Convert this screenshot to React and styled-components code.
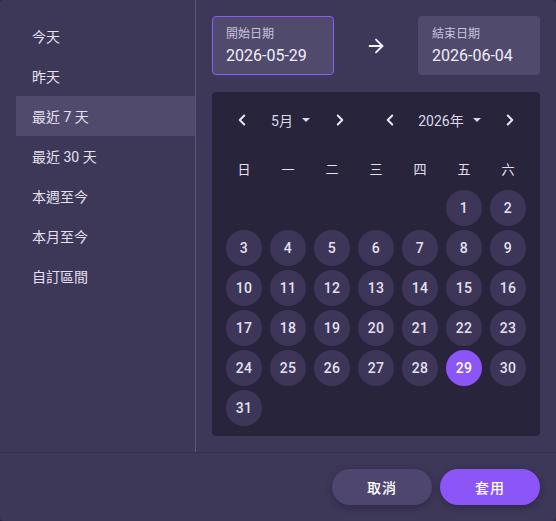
import React from "react";
import styled, { createGlobalStyle } from "styled-components";
import { ChevronLeft, ChevronRight, ArrowRight } from "lucide-react";

const GlobalStyle = createGlobalStyle`
  html, body {
    margin: 0;
    padding: 0;
    background: #2c2840;
  }
  body {
    font-family: Roboto, "Noto Sans CJK TC", sans-serif;
    color: #ebe7f7;
  }
`;

const presets = ["今天", "昨天", "最近 7 天", "最近 30 天", "本週至今", "本月至今", "自訂區間"];
const weekdays = ["日", "一", "二", "三", "四", "五", "六"];

// May 2026 starts on a Friday
const leadingBlanks = 5;
const daysInMonth = 31;
const selectedDay = 29;

const Picker = () => {
  const cells = [];
  for (let i = 0; i < leadingBlanks; i++) cells.push(null);
  for (let d = 1; d <= daysInMonth; d++) cells.push(d);

  return (
    <Dialog>
      <Body>
        <Sidebar>
          {presets.map((p) => (
            <Preset key={p} active={p === "最近 7 天"}>
              {p}
            </Preset>
          ))}
        </Sidebar>
        <Panel>
          <Inputs>
            <DateField focused>
              <FieldLabel>開始日期</FieldLabel>
              <FieldValue>2026-05-29</FieldValue>
            </DateField>
            <ArrowCell>
              <ArrowRight size={22} strokeWidth={2} />
            </ArrowCell>
            <DateField>
              <FieldLabel>結束日期</FieldLabel>
              <FieldValue>2026-06-04</FieldValue>
            </DateField>
          </Inputs>
          <Calendar>
            <Header>
              <NavGroup>
                <NavButton>
                  <ChevronLeft size={18} strokeWidth={2.6} />
                </NavButton>
                <Select>
                  5月
                  <Caret />
                </Select>
                <NavButton>
                  <ChevronRight size={18} strokeWidth={2.6} />
                </NavButton>
              </NavGroup>
              <NavGroup>
                <NavButton>
                  <ChevronLeft size={18} strokeWidth={2.6} />
                </NavButton>
                <Select>
                  2026年
                  <Caret />
                </Select>
                <NavButton>
                  <ChevronRight size={18} strokeWidth={2.6} />
                </NavButton>
              </NavGroup>
            </Header>
            <Grid>
              {weekdays.map((w) => (
                <Weekday key={w}>{w}</Weekday>
              ))}
            </Grid>
            <Grid>
              {cells.map((d, i) => (
                <DayCell key={i}>
                  {d && <Day selected={d === selectedDay}>{d}</Day>}
                </DayCell>
              ))}
            </Grid>
          </Calendar>
        </Panel>
      </Body>
      <Footer>
        <Button>取消</Button>
        <Button primary>套用</Button>
      </Footer>
    </Dialog>
  );
};

const Caret = () => (
  <CaretSvg width="10" height="6" viewBox="0 0 10 6">
    <path d="M1 1 L9 1 L5 5 Z" fill="currentColor" />
  </CaretSvg>
);

const Dialog = styled.div`
  width: 556px;
  height: 521px;
  background: #3d3758;
  border-radius: 4px;
  overflow: hidden;
  display: flex;
  flex-direction: column;
`;

const Body = styled.div`
  display: flex;
  height: 452px;
  border-bottom: 1px solid #343049;
`;

const Sidebar = styled.div`
  width: 196px;
  padding: 16px 0 0 16px;
  box-sizing: border-box;
  border-right: 1px solid #5a5478;
  display: flex;
  flex-direction: column;
  flex-shrink: 0;
`;

const Preset = styled.div`
  height: 40px;
  display: flex;
  align-items: center;
  padding-left: 16px;
  font-family: Roboto, "Noto Sans CJK TC", sans-serif;
  font-size: 14px;
  color: #e6e2f3;
  background: ${(p) => (p.active ? "#504a6c" : "transparent")};
`;

const Panel = styled.div`
  flex: 1;
  padding: 16px;
  display: flex;
  flex-direction: column;
  gap: 17px;
`;

const Inputs = styled.div`
  display: grid;
  grid-template-columns: 122px 84px 122px;
  height: 59px;
`;

const DateField = styled.div`
  background: #504a6c;
  border-radius: 4px;
  border: 1px solid ${(p) => (p.focused ? "#8b5cf6" : "transparent")};
  padding: 0 13px;
  display: flex;
  flex-direction: column;
  justify-content: center;
  gap: 4px;
`;

const FieldLabel = styled.div`
  font-size: 12px;
  color: #c9c3dd;
  line-height: 16px;
`;

const FieldValue = styled.div`
  font-size: 16px;
  color: #f1eefa;
  line-height: 20px;
`;

const ArrowCell = styled.div`
  display: flex;
  align-items: center;
  justify-content: center;
  color: #f4f2fb;
`;

const Calendar = styled.div`
  background: #28243c;
  border-radius: 4px;
  padding: 8px 10px;
  height: 344px;
  box-sizing: border-box;
  display: flex;
  flex-direction: column;
`;

const Header = styled.div`
  height: 40px;
  margin-bottom: 8px;
  flex-shrink: 0;
  display: grid;
  grid-template-columns: 126px 148px;
  column-gap: 22px;
  padding: 0 6px;
`;

const NavGroup = styled.div`
  display: flex;
  align-items: center;
  justify-content: space-between;
`;

const NavButton = styled.div`
  width: 28px;
  height: 28px;
  display: flex;
  align-items: center;
  justify-content: center;
  color: #e9e6f5;
`;

const Select = styled.div`
  display: flex;
  align-items: center;
  gap: 8px;
  font-size: 14px;
  color: #dcd8ea;
`;

const CaretSvg = styled.svg`
  color: #dcd8ea;
  display: block;
`;

const Grid = styled.div`
  display: grid;
  flex-shrink: 0;
  grid-template-columns: repeat(7, 44px);
  grid-auto-rows: 40px;
`;

const Weekday = styled.div`
  display: flex;
  align-items: center;
  justify-content: center;
  font-size: 13px;
  color: #e4e0f0;
`;

const DayCell = styled.div`
  display: flex;
  align-items: center;
  justify-content: center;
`;

const Day = styled.div`
  width: 36px;
  height: 36px;
  border-radius: 50%;
  display: flex;
  align-items: center;
  justify-content: center;
  font-size: 14px;
  font-weight: 500;
  letter-spacing: 0.3px;
  color: ${(p) => (p.selected ? "#ffffff" : "#e4e0f1")};
  background: ${(p) => (p.selected ? "#8b55f7" : "#3d3659")};
`;

const Footer = styled.div`
  flex: 1;
  display: flex;
  justify-content: flex-end;
  align-items: flex-start;
  gap: 8px;
  padding: 16px 16px 0 0;
`;

const Button = styled.button`
  width: 100px;
  height: 36px;
  border: none;
  border-radius: 18px;
  font-family: Roboto, "Noto Sans CJK TC", sans-serif;
  font-size: 14px;
  font-weight: 500;
  letter-spacing: 1px;
  color: #ffffff;
  background: ${(p) => (p.primary ? "#8b55f7" : "#4e466f")};
  box-shadow: 0 2px 6px rgba(20, 16, 36, 0.35);
`;

export default function App() {
  return (
    <>
      <GlobalStyle />
      <Picker />
    </>
  );
}
